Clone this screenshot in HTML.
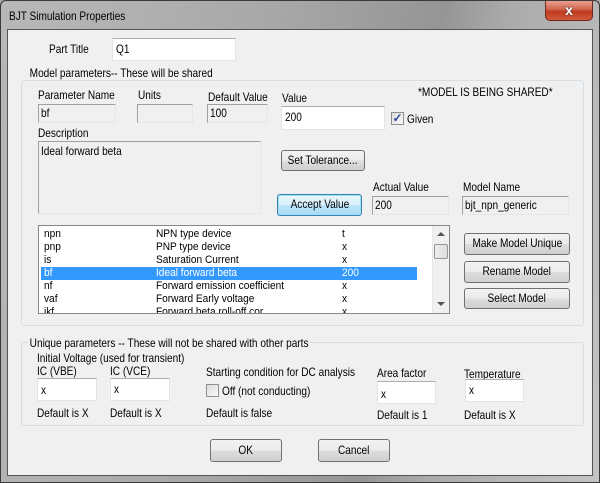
<!DOCTYPE html>
<html><head><style>
*{margin:0;padding:0;box-sizing:border-box}
body{width:600px;height:483px;overflow:hidden;background:#a6a6a6;font-family:"Liberation Sans",sans-serif;font-size:12px;color:#000;position:relative}
#win{position:absolute;left:0;top:0;width:600px;height:483px;border:1px solid #3a3a3a;border-radius:6px 6px 0 0;background:linear-gradient(100deg,#b8b8b8 0%,#a8a8a8 40%,#959595 65%,#ababab 75%,#c4c4c4 100%)}
#client{position:absolute;left:7px;top:29px;width:586px;height:447px;background:#f0f0f0;border:1px solid #555}
.a{position:absolute;white-space:nowrap;transform:scaleX(.84);transform-origin:0 0;line-height:14px}
.in{position:absolute;background:#fff;border:1px solid #e3e3e3;border-top-color:#abadb3}
.dis{position:absolute;background:#f0f0f0;border:1px solid #a0a0a0;border-right-color:#e6e6e6;border-bottom-color:#e6e6e6}
.in span,.dis span{position:absolute;left:3px;top:3px;white-space:nowrap;transform:scaleX(.84);transform-origin:0 0;line-height:14px}
.btn{position:absolute;border:1px solid #707070;border-radius:3px;background:linear-gradient(#f2f2f2 0%,#ebebeb 50%,#dddddd 51%,#cfcfcf 100%);text-align:center;line-height:18px;white-space:nowrap;overflow:visible}
.btn span{display:inline-block;transform:scaleX(.84);white-space:nowrap;margin:0 -20px}
.grp{position:absolute;border:1px solid #d5dfe5;border-radius:3px}
.cb{position:absolute;width:13px;height:13px;border:1px solid #8e8f8f;background:linear-gradient(135deg,#dcdcdc,#fafafa)}
.row{position:absolute;left:0;width:374px;height:13px;font-size:11px;line-height:13px}
.row b{font-weight:normal;position:absolute;top:0;white-space:nowrap;transform:scaleX(.92);transform-origin:0 0}
</style></head><body>
<div id="win">
<div class="a" style="left:8px;top:8px;color:#000">BJT Simulation Properties</div>
<div style="position:absolute;left:544px;top:0;width:48px;height:20px;border:1px solid #6b2b20;border-top:none;border-radius:0 0 5px 5px;background:linear-gradient(#e8a090 0%,#d0624a 45%,#c0391f 55%,#d25a3c 100%);color:#fff;font-weight:bold;font-size:14px;text-align:center;line-height:18px;text-shadow:0 0 2px #333">x</div>
</div>
<div id="client">
</div>
<div style="position:absolute;left:0;top:0">
<div class="a" style="left:49px;top:42px">Part Title</div>
<div class="in" style="left:112px;top:38px;width:124px;height:23px"><span>Q1</span></div>

<div class="grp" style="left:21px;top:80px;width:563px;height:246px"></div>
<div class="a" style="left:28px;top:66px;background:#f0f0f0;padding:0 2px">Model parameters-- These will be shared</div>
<div class="a" style="left:38px;top:88px">Parameter Name</div>
<div class="a" style="left:138px;top:88px">Units</div>
<div class="a" style="left:208px;top:90px">Default Value</div>
<div class="a" style="left:282px;top:91px">Value</div>
<div class="a" style="left:418px;top:85px">*MODEL IS BEING SHARED*</div>
<div class="dis" style="left:38px;top:104px;width:78px;height:19px"><span style="top:1px;left:2px">bf</span></div>
<div class="dis" style="left:137px;top:104px;width:56px;height:19px"></div>
<div class="dis" style="left:207px;top:104px;width:61px;height:19px"><span style="top:1px;left:2px">100</span></div>
<div class="in" style="left:281px;top:106px;width:104px;height:24px"><span>200</span></div>
<div class="cb" style="left:391px;top:112px;color:#2a4a9a;font-size:12px;line-height:11px;text-align:center;font-weight:bold">✓</div>
<div class="a" style="left:407px;top:112px">Given</div>
<div class="a" style="left:38px;top:126px">Description</div>
<div class="dis" style="left:38px;top:141px;width:223px;height:73px"><span style="top:2px;left:2px">Ideal forward beta</span></div>
<div class="btn" style="left:281px;top:150px;width:84px;height:21px"><span>Set Tolerance...</span></div>
<div class="btn" style="left:277px;top:194px;width:85px;height:22px;border-color:#3c7fb1;box-shadow:inset 0 0 0 1px #9ee0f6;background:linear-gradient(#eaf6fd 0%,#d9f0fc 50%,#bee6fd 51%,#a7d9f5 100%)"><span>Accept Value</span></div>
<div class="a" style="left:373px;top:180px">Actual Value</div>
<div class="a" style="left:463px;top:180px">Model Name</div>
<div class="dis" style="left:372px;top:196px;width:77px;height:19px"><span style="top:1px;left:2px">200</span></div>
<div class="dis" style="left:462px;top:196px;width:107px;height:19px"><span style="top:1px;left:2px">bjt_npn_generic</span></div>

<div style="position:absolute;left:38px;top:225px;width:412px;height:89px;background:#fff;border:1px solid #828790;overflow:hidden">
 <div style="position:absolute;left:0;top:2px;width:392px;height:86px">
  <div class="row" style="top:0"><b style="left:5px">npn</b><b style="left:117px">NPN type device</b><b style="left:303px">t</b></div>
  <div class="row" style="top:13px"><b style="left:5px">pnp</b><b style="left:117px">PNP type device</b><b style="left:303px">x</b></div>
  <div class="row" style="top:26px"><b style="left:5px">is</b><b style="left:117px">Saturation Current</b><b style="left:303px">x</b></div>
  <div class="row" style="top:39px;left:2px;background:#3399ff;color:#fff;width:376px"><b style="left:3px">bf</b><b style="left:115px">Ideal forward beta</b><b style="left:301px">200</b></div>
  <div class="row" style="top:52px"><b style="left:5px">nf</b><b style="left:117px">Forward emission coefficient</b><b style="left:303px">x</b></div>
  <div class="row" style="top:65px"><b style="left:5px">vaf</b><b style="left:117px">Forward Early voltage</b><b style="left:303px">x</b></div>
  <div class="row" style="top:78px"><b style="left:5px">ikf</b><b style="left:117px">Forward beta roll-off cor</b><b style="left:303px">x</b></div>
 </div>
 <div style="position:absolute;right:0;top:0;width:17px;height:87px;background:#f0f0f0;border-left:1px solid #e8e8e8">
  <div style="position:absolute;left:4px;top:6px;width:0;height:0;border-left:4px solid transparent;border-right:4px solid transparent;border-bottom:4px solid #555"></div>
  <div style="position:absolute;left:1px;top:18px;width:14px;height:15px;border:1px solid #979797;border-radius:2px;background:linear-gradient(90deg,#eee,#dcdcdc)"></div>
  <div style="position:absolute;left:4px;top:76px;width:0;height:0;border-left:4px solid transparent;border-right:4px solid transparent;border-top:4px solid #555"></div>
 </div>
</div>
<div class="btn" style="left:464px;top:233px;width:106px;height:22px"><span>Make Model Unique</span></div>
<div class="btn" style="left:464px;top:261px;width:106px;height:22px"><span>Rename Model</span></div>
<div class="btn" style="left:464px;top:288px;width:106px;height:21px"><span>Select Model</span></div>

<div class="grp" style="left:21px;top:342px;width:563px;height:84px"></div>
<div class="a" style="left:28px;top:336px;background:#f0f0f0;padding:0 2px">Unique parameters -- These will not be shared with other parts</div>
<div class="a" style="left:37px;top:351px">Initial Voltage (used for transient)</div>
<div class="a" style="left:37px;top:364px">IC (VBE)</div>
<div class="a" style="left:110px;top:364px">IC (VCE)</div>
<div class="in" style="left:37px;top:378px;width:60px;height:23px"><span style="top:4px">x</span></div>
<div class="in" style="left:110px;top:378px;width:60px;height:23px"><span style="top:3px">x</span></div>
<div class="a" style="left:37px;top:406px">Default is X</div>
<div class="a" style="left:110px;top:406px">Default is X</div>
<div class="a" style="left:206px;top:365px">Starting condition for DC analysis</div>
<div class="cb" style="left:206px;top:384px"></div>
<div class="a" style="left:222px;top:384px">Off (not conducting)</div>
<div class="a" style="left:206px;top:406px">Default is false</div>
<div class="a" style="left:377px;top:366px">Area factor</div>
<div class="in" style="left:377px;top:381px;width:59px;height:23px"><span style="top:5px">x</span></div>
<div class="a" style="left:377px;top:408px">Default is 1</div>
<div class="a" style="left:464px;top:367px">Temperature</div>
<div class="in" style="left:465px;top:379px;width:59px;height:23px"><span>x</span></div>
<div class="a" style="left:464px;top:408px">Default is X</div>

<div class="btn" style="left:210px;top:439px;width:72px;height:23px;line-height:20px"><span>OK</span></div>
<div class="btn" style="left:318px;top:439px;width:72px;height:23px;line-height:20px"><span>Cancel</span></div>
</div>
</body></html>
